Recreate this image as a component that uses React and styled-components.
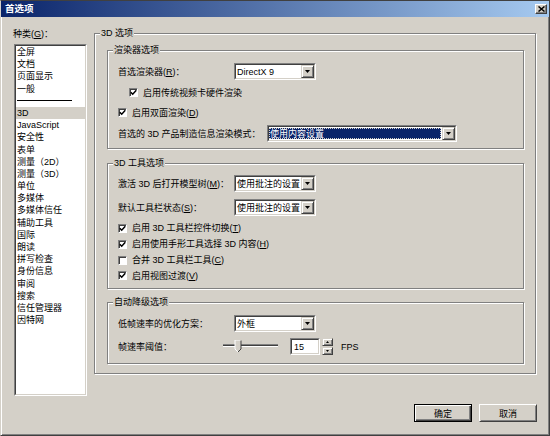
import React from 'react';
import styled, { createGlobalStyle, css } from 'styled-components';

const FONT = `"Liberation Sans", "Noto Sans CJK SC", sans-serif`;

const Global = createGlobalStyle`
  * { box-sizing: border-box; }
  html, body { margin: 0; padding: 0; background: #d4d0c8; }
  body { font-family: ${FONT}; font-size: 9px; color: #000; }
  u { text-underline-offset: 1px; }
`;

const Window = styled.div`
  width: 550px;
  height: 436px;
  display: flex;
  flex-direction: column;
  background: #d4d0c8;
  border: 1px solid;
  border-color: #404040 #404040 #404040 #d4d0c8;
  box-shadow: inset 1px 1px #fff, inset -1px -1px #808080;
  overflow: hidden;
`;

const TitleBar = styled.div`
  height: 16px;
  flex: none;
  display: flex;
  align-items: center;
  justify-content: space-between;
  background: linear-gradient(to right, #0a246a 0%, #a6caf0 100%);
  padding: 0 2px 0 4px;
`;

const TitleText = styled.span`
  color: #fff;
  font-weight: bold;
  font-size: 9.5px;
  line-height: 12px;
`;

const CloseBtn = styled.div`
  width: 12px;
  height: 10px;
  display: flex;
  align-items: center;
  justify-content: center;
  background: #d4d0c8;
  border: 1px solid;
  border-color: #fff #404040 #404040 #fff;
  box-shadow: inset -1px -1px #808080;
`;

const Content = styled.div`
  display: flex;
  align-items: flex-start;
  padding-left: 13px;
`;

const Sidebar = styled.div`
  display: flex;
  flex-direction: column;
  padding-top: 11px;
  width: 73px;
  flex: none;
`;

const SideLabel = styled.div`
  line-height: 12px;
  height: 12px;
  margin-left: -1px;
  white-space: nowrap;
`;

const ListBox = styled.div`
  margin-top: 4px;
  width: 73px;
  height: 352px;
  border: 1px solid;
  border-color: #808080 #fff #fff #808080;
`;

const ListInner = styled.div`
  height: 100%;
  background: #fff;
  border: 1px solid;
  border-color: #404040 #d4d0c8 #d4d0c8 #404040;
  display: flex;
  flex-direction: column;
`;

const ListItem = styled.div`
  height: 12.2px;
  line-height: 12.2px;
  padding-left: 1px;
  white-space: nowrap;
  background: ${(p) => (p.$selected ? '#d4d0c8' : 'transparent')};
`;

const SepItem = styled.div`
  height: 12.2px;
  display: flex;
  align-items: center;
  padding-left: 1px;
`;

const SepLine = styled.div`
  width: 55px;
  height: 1px;
  background: #000;
`;

const Main = styled.div`
  margin-left: 7px;
  margin-top: 16px;
`;

const GroupBox = styled.div`
  position: relative;
  width: ${(p) => p.$w}px;
  height: ${(p) => p.$h}px;
  flex: none;
  border: 1px solid #808080;
  box-shadow: inset 1px 1px #fff, 1px 1px #fff;
  padding: ${(p) => p.$pad};
  margin-top: ${(p) => p.$mt || 0}px;
  display: flex;
  flex-direction: column;
`;

const Legend = styled.span`
  position: absolute;
  top: -7px;
  left: 5px;
  padding: 0 1px;
  background: #d4d0c8;
  line-height: 12px;
  white-space: nowrap;
`;

const Row = styled.div`
  display: flex;
  align-items: center;
  height: ${(p) => p.$h || 17}px;
  margin-top: ${(p) => p.$mt || 0}px;
  padding-left: ${(p) => p.$indent || 0}px;
  white-space: nowrap;
  line-height: 12px;
`;

const Label = styled.div`
  width: ${(p) => p.$w || 116}px;
  flex: none;
`;

const SelectOuter = styled.div`
  width: ${(p) => p.$w}px;
  height: 17px;
  flex: none;
  border: 1px solid;
  border-color: #808080 #fff #fff #808080;
`;

const SelectInner = styled.div`
  height: 100%;
  display: flex;
  background: #fff;
  border: 1px solid;
  border-color: #404040 #d4d0c8 #d4d0c8 #404040;
`;

const SelectValue = styled.div`
  flex: 1;
  display: flex;
  align-items: center;
  margin: 1px 1px 1px 0;
  padding-left: 1px;
  ${(p) =>
    p.$active &&
    css`
      background: #0a246a;
      color: #fff;
      outline: 1px dotted #d4d0c8;
      outline-offset: -1px;
    `}
`;

const RaisedBox = styled.div`
  display: flex;
  align-items: center;
  justify-content: center;
  background: #d4d0c8;
  border: 1px solid;
  border-color: #d4d0c8 #404040 #404040 #d4d0c8;
  box-shadow: inset 1px 1px #fff, inset -1px -1px #808080;
`;

const DropButton = styled(RaisedBox)`
  width: 13px;
  height: 100%;
  flex: none;
`;

const CheckBox = styled.span`
  width: 9px;
  height: 9px;
  flex: none;
  background: #fff;
  border: 1px solid;
  border-color: #808080 #fff #fff #808080;
  box-shadow: inset 1px 1px #404040;
  display: flex;
  align-items: center;
  justify-content: center;
  margin-right: 5px;
`;

const SpinInput = styled.div`
  width: 30px;
  height: 17px;
  flex: none;
  border: 1px solid;
  border-color: #808080 #fff #fff #808080;
`;

const SpinInner = styled.div`
  height: 100%;
  background: #fff;
  border: 1px solid;
  border-color: #404040 #d4d0c8 #d4d0c8 #404040;
  display: flex;
  align-items: center;
  padding-left: 2px;
`;

const SpinButtons = styled.div`
  display: flex;
  flex-direction: column;
  gap: 1px;
  width: 11px;
  height: 17px;
  margin-left: 2px;
  flex: none;
`;

const SpinBtn = styled(RaisedBox)`
  flex: 1;
`;

const Unit = styled.span`
  margin-left: 8px;
`;

const SliderWrap = styled.div`
  width: 55px;
  height: 14px;
  flex: none;
  display: flex;
`;

const Footer = styled.div`
  display: flex;
  justify-content: flex-end;
  gap: 7px;
  margin-top: 8px;
  padding-right: 12px;
`;

const Button = styled.button`
  width: 58px;
  height: 18px;
  padding: 0;
  font-family: ${FONT};
  font-size: 9px;
  color: #000;
  background: #d4d0c8;
  border: 1px solid;
  ${(p) =>
    p.$default
      ? css`
          border-color: #000;
          box-shadow: inset 1px 1px #fff, inset -1px -1px #404040, inset -2px -2px #808080;
        `
      : css`
          border-color: #fff #404040 #404040 #fff;
          box-shadow: inset 1px 1px #d4d0c8, inset -1px -1px #808080;
        `}
`;

const DownArrow = ({ size = 5 }) => (
  <svg width={size} height={Math.ceil(size / 2)} viewBox="0 0 5 3">
    <polygon points="0,0 5,0 2.5,3" fill="#000" />
  </svg>
);

const UpArrow = () => (
  <svg width="3" height="2" viewBox="0 0 5 3">
    <polygon points="0,3 5,3 2.5,0" fill="#000" />
  </svg>
);

const Check = () => (
  <svg width="7" height="7" viewBox="0 0 7 7">
    <path d="M0.8 3.2 L2.7 5.2 L6.3 1.2" stroke="#000" strokeWidth="1.5" fill="none" />
  </svg>
);

const Select = ({ w, value, active }) => (
  <SelectOuter $w={w}>
    <SelectInner>
      <SelectValue $active={active}>{value}</SelectValue>
      <DropButton>
        <DownArrow />
      </DropButton>
    </SelectInner>
  </SelectOuter>
);

const CheckRow = ({ checked = true, indent, mt, h = 13, children }) => (
  <Row $h={h} $mt={mt} $indent={indent}>
    <CheckBox>{checked && <Check />}</CheckBox>
    <span>{children}</span>
  </Row>
);

const Slider = () => (
  <SliderWrap>
    <svg width="55" height="14" viewBox="0 0 55 14">
      <rect x="0" y="4" width="55" height="1" fill="#808080" />
      <rect x="0" y="5" width="55" height="1" fill="#404040" />
      <rect x="0" y="6" width="55" height="1" fill="#fff" />
      <polygon points="12,0 18,0 18,9 15,12 12,9" fill="#d4d0c8" />
      <polyline points="12,9 12,0 18,0" fill="none" stroke="#fff" strokeWidth="1" />
      <polyline points="18,0.5 18,9 15,12" fill="none" stroke="#404040" strokeWidth="1" />
      <polyline points="15,12 12,9" fill="none" stroke="#fff" strokeWidth="1" />
    </svg>
  </SliderWrap>
);

const categories = [
  '全屏', '文档', '页面显示', '一般', '---', '3D', 'JavaScript', '安全性', '表单',
  '测量（2D）', '测量（3D）', '单位', '多媒体', '多媒体信任', '辅助工具', '国际', '朗读',
  '拼写检查', '身份信息', '审阅', '搜索', '信任管理器', '因特网',
];

export default function App() {
  return (
    <>
      <Global />
      <Window>
        <TitleBar>
          <TitleText>首选项</TitleText>
          <CloseBtn>
            <svg width="7" height="6" viewBox="0 0 7 6">
              <path d="M0.5 0.5 L6.5 5.5 M6.5 0.5 L0.5 5.5" stroke="#000" strokeWidth="1.5" />
            </svg>
          </CloseBtn>
        </TitleBar>
        <Content>
          <Sidebar>
            <SideLabel>
              种类(<u>G</u>)：
            </SideLabel>
            <ListBox>
              <ListInner>
                {categories.map((c, i) =>
                  c === '---' ? (
                    <SepItem key={i}>
                      <SepLine />
                    </SepItem>
                  ) : (
                    <ListItem key={i} $selected={c === '3D'}>
                      {c}
                    </ListItem>
                  )
                )}
              </ListInner>
            </ListBox>
          </Sidebar>
          <Main>
            <GroupBox $w={442} $h={341} $pad="16px 0 0 12px">
              <Legend>3D 选项</Legend>

              <GroupBox $w={417} $h={99} $pad="12px 0 0 10px">
                <Legend>渲染器选项</Legend>
                <Row>
                  <Label>
                    首选渲染器(<u>R</u>)：
                  </Label>
                  <Select w={82} value="DirectX 9" />
                </Row>
                <CheckRow indent={11} mt={6}>启用传统视频卡硬件渲染</CheckRow>
                <CheckRow mt={7}>
                  启用双面渲染(<u>D</u>)
                </CheckRow>
                <Row $mt={6}>
                  <Label $w={149}>首选的 3D 产品制造信息渲染模式：</Label>
                  <Select w={190} value="使用内容设置" active />
                </Row>
              </GroupBox>

              <GroupBox $w={417} $h={126} $mt={14} $pad="11px 0 0 10px">
                <Legend>3D 工具选项</Legend>
                <Row>
                  <Label>
                    激活 3D 后打开模型树(<u>M</u>)：
                  </Label>
                  <Select w={82} value="使用批注的设置" />
                </Row>
                <Row $mt={7}>
                  <Label>
                    默认工具栏状态(<u>S</u>)：
                  </Label>
                  <Select w={82} value="使用批注的设置" />
                </Row>
                <CheckRow h={16} mt={4}>
                  启用 3D 工具栏控件切换(<u>T</u>)
                </CheckRow>
                <CheckRow h={16}>
                  启用使用手形工具选择 3D 内容(<u>H</u>)
                </CheckRow>
                <CheckRow h={16} checked={false}>
                  合并 3D 工具栏工具(<u>C</u>)
                </CheckRow>
                <CheckRow h={15}>
                  启用视图过渡(<u>V</u>)
                </CheckRow>
              </GroupBox>

              <GroupBox $w={417} $h={62} $mt={13} $pad="12px 0 0 10px">
                <Legend>自动降级选项</Legend>
                <Row>
                  <Label>低帧速率的优化方案：</Label>
                  <Select w={82} value="外框" />
                </Row>
                <Row $mt={6}>
                  <Label $w={105}>帧速率阈值：</Label>
                  <Slider />
                  <SpinInput style={{ marginLeft: 12 }}>
                    <SpinInner>15</SpinInner>
                  </SpinInput>
                  <SpinButtons>
                    <SpinBtn>
                      <UpArrow />
                    </SpinBtn>
                    <SpinBtn>
                      <DownArrow size={3} />
                    </SpinBtn>
                  </SpinButtons>
                  <Unit>FPS</Unit>
                </Row>
              </GroupBox>
            </GroupBox>
          </Main>
        </Content>
        <Footer>
          <Button $default>确定</Button>
          <Button>取消</Button>
        </Footer>
      </Window>
    </>
  );
}
